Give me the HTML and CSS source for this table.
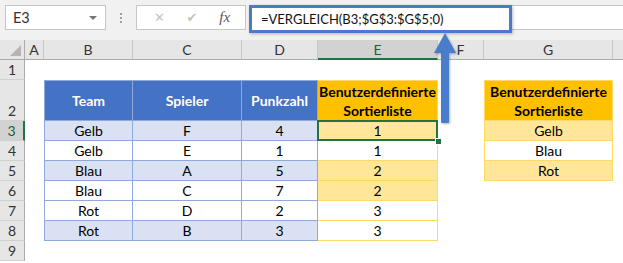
FILE: index.html
```html
<!DOCTYPE html>
<html>
<head>
  <title>VERGLEICH</title>
  <meta charset="UTF-8">
  <link rel="stylesheet" href="styles.css">
</head>
<body>
  <div class="toolbar">
    <div class="namebox"><span>E3</span><span class="caret"></span></div>
    <div class="grip"><i></i><i></i><i></i></div>
    <div class="fxbox">
      <span class="btn">&#x2715;</span>
      <span class="btn">&#x2714;</span>
      <span class="fx">fx</span>
    </div>
    <div class="formula">
      <div class="formula-hl">=VERGLEICH(B3;$G$3:$G$5;0)</div>
    </div>
  </div>

  <div class="sheet">
    <!-- column headers -->
    <div class="ch corner"><span class="tri"></span></div>
    <div class="ch">A</div>
    <div class="ch">B</div>
    <div class="ch">C</div>
    <div class="ch">D</div>
    <div class="ch sel-col">E</div>
    <div class="ch">F</div>
    <div class="ch">G</div>
    <div class="ch last"></div>

    <!-- 1 -->
    <div class="rh">1</div>
    <div></div><div></div><div></div><div></div><div></div><div></div><div></div><div></div>

    <!-- 2 -->
    <div class="rh tall">2</div>
    <div></div>
    <div class="th first">Team</div>
    <div class="th">Spieler</div>
    <div class="th">Punkzahl</div>
    <div class="yh">Benutzerdefinierte<br>Sortierliste</div>
    <div></div>
    <div class="yh side">Benutzerdefinierte<br>Sortierliste</div>
    <div></div>

    <!-- 3 -->
    <div class="rh sel-row">3</div>
    <div></div>
    <div class="t first band">Gelb</div>
    <div class="t band">F</div>
    <div class="t band">4</div>
    <div class="y fill active">1<span class="handle"></span></div>
    <div></div>
    <div class="y side fill">Gelb</div>
    <div></div>

    <!-- 4 -->
    <div class="rh">4</div>
    <div></div>
    <div class="t first">Gelb</div>
    <div class="t">E</div>
    <div class="t">1</div>
    <div class="y">1</div>
    <div></div>
    <div class="y side">Blau</div>
    <div></div>

    <!-- 5 -->
    <div class="rh">5</div>
    <div></div>
    <div class="t first band">Blau</div>
    <div class="t band">A</div>
    <div class="t band">5</div>
    <div class="y fill">2</div>
    <div></div>
    <div class="y side fill">Rot</div>
    <div></div>

    <!-- 6 -->
    <div class="rh">6</div>
    <div></div>
    <div class="t first">Blau</div>
    <div class="t">C</div>
    <div class="t">7</div>
    <div class="y fill">2</div>
    <div></div><div></div><div></div>

    <!-- 7 -->
    <div class="rh">7</div>
    <div></div>
    <div class="t first">Rot</div>
    <div class="t">D</div>
    <div class="t">2</div>
    <div class="y">3</div>
    <div></div><div></div><div></div>

    <!-- 8 -->
    <div class="rh">8</div>
    <div></div>
    <div class="t first band">Rot</div>
    <div class="t band">B</div>
    <div class="t band">3</div>
    <div class="y">3</div>
    <div></div><div></div><div></div>

    <!-- 9 -->
    <div class="rh">9</div>
    <div></div><div></div><div></div><div></div><div></div><div></div><div></div><div></div>
  </div>

  <svg class="arrow" width="26" height="94" viewBox="0 0 26 94">
    <defs>
      <filter id="sh" x="-30%" y="-10%" width="160%" height="120%">
        <feDropShadow dx="1" dy="1" stdDeviation="1" flood-color="#000" flood-opacity="0.3"/>
      </filter>
    </defs>
    <g filter="url(#sh)" fill="#4a7bcb">
      <polygon points="12,1 1,21 23,21"/>
      <rect x="8" y="20" width="8" height="71" rx="1"/>
    </g>
  </svg>
</body>
</html>
```

FILE: styles.css
```css
body {
  margin: 0;
  width: 623px;
  height: 263px;
  overflow: hidden;
  position: relative;
  background: #fff;
  font-family: Lato, "Liberation Sans", sans-serif;
  font-size: 14px;
  color: #000;
}

/* formula bar */
.toolbar {
  height: 40px;
  background: #f1f1f1;
  display: flex;
  align-items: flex-start;
  padding-top: 5px;
  box-sizing: border-box;
}
.namebox {
  width: 101px;
  height: 25px;
  margin-left: 5px;
  background: #fff;
  border: 1px solid #c6c6c6;
  display: flex;
  align-items: center;
  justify-content: space-between;
  padding: 0 8px 0 7px;
  box-sizing: border-box;
  font-size: 14.5px;
  color: #333;
}
.caret {
  width: 0; height: 0;
  border-left: 4px solid transparent;
  border-right: 4px solid transparent;
  border-top: 4px solid #777;
}
.grip {
  width: 30px;
  height: 25px;
  display: flex;
  flex-direction: column;
  align-items: center;
  justify-content: center;
  gap: 2px;
}
.grip i {
  width: 2px; height: 2px;
  background: #a0a0a0;
}
.fxbox {
  width: 110px;
  height: 25px;
  background: #fff;
  border: 1px solid #c6c6c6;
  box-sizing: border-box;
  display: flex;
  align-items: center;
  justify-content: space-around;
  padding: 0 4px 0 6px;
}
.fxbox .btn {
  color: #c4c4c4;
  font-size: 13px;
  font-family: "DejaVu Sans", sans-serif;
}
.fx {
  font-family: "Liberation Serif", serif;
  font-style: italic;
  font-size: 15px;
  color: #555;
}
.formula {
  flex: 1;
  height: 25px;
  margin-left: 3px;
  background: #fff;
  border-top: 1px solid #c6c6c6;
  border-bottom: 1px solid #c6c6c6;
  box-sizing: border-box;
  position: relative;
}
.formula-hl {
  position: absolute;
  left: 0; top: -1px;
  width: 263px;
  height: 28px;
  border: 3px solid #4a7bcb;
  box-sizing: border-box;
  box-shadow: 1px 1px 3px rgba(0,0,0,0.25);
  padding-left: 9px;
  line-height: 22px;
  font-size: 13px;
  color: #111;
  background: #fff;
}

/* sheet grid */
.sheet {
  display: grid;
  grid-template-columns: 25px 19px 89px 109px 76px 120px 46px 129px 10px;
  grid-template-rows: 20px 20px 41px repeat(7, 20px);
}
.sheet > div {
  display: flex;
  align-items: center;
  justify-content: center;
  box-sizing: border-box;
}
.ch {
  background: #e6e6e6;
  border-right: 1px solid #c8c8c8;
  border-bottom: 1px solid #ababab;
  color: #333;
}
.ch.last { border-right: none; }
.corner { position: relative; border-right-color: #ababab; }
.tri {
  position: absolute;
  right: 3px; bottom: 3px;
  width: 0; height: 0;
  border-left: 11px solid transparent;
  border-bottom: 11px solid #b5b5b5;
}
.sel-col {
  background: #d2d2d2;
  border-bottom: 2px solid #217346;
  color: #1c5e39;
}
.rh {
  background: #e6e6e6;
  border-right: 1px solid #ababab;
  border-bottom: 1px solid #d0d0d0;
  color: #333;
}
.rh.tall { align-items: flex-end; padding-bottom: 1px; }
.sel-row {
  background: #d2d2d2;
  border-right: 2px solid #217346;
  color: #1c5e39;
}

/* blue table */
.th, .t {
  border-right: 1px solid #8eaadb;
  border-bottom: 1px solid #8eaadb;
}
.th {
  background: #4472c4;
  color: #fff;
  font-weight: bold;
  border-top: 1px solid #8eaadb;
}
.first { border-left: 1px solid #8eaadb; }
.band { background: #d9e1f2; }

/* yellow table */
.yh, .y {
  border-right: 1px solid #ffd966;
  border-bottom: 1px solid #ffd966;
}
.yh {
  background: #ffc000;
  font-weight: bold;
  text-align: center;
  line-height: 19px;
  border-top: 1px solid #ffd966;
}
.side { border-left: 1px solid #ffd966; }
.fill { background: #ffe699; }

.active { position: relative; }
.active::after {
  content: "";
  position: absolute;
  left: -1px; top: -1px; right: -1px; bottom: -1px;
  border: 2px solid #217346;
}
.handle {
  position: absolute;
  right: -5px; bottom: -5px;
  width: 5px; height: 5px;
  background: #217346;
  border: 1px solid #fff;
  z-index: 1;
}

.arrow {
  position: absolute;
  left: 433px;
  top: 32px;
}
```
